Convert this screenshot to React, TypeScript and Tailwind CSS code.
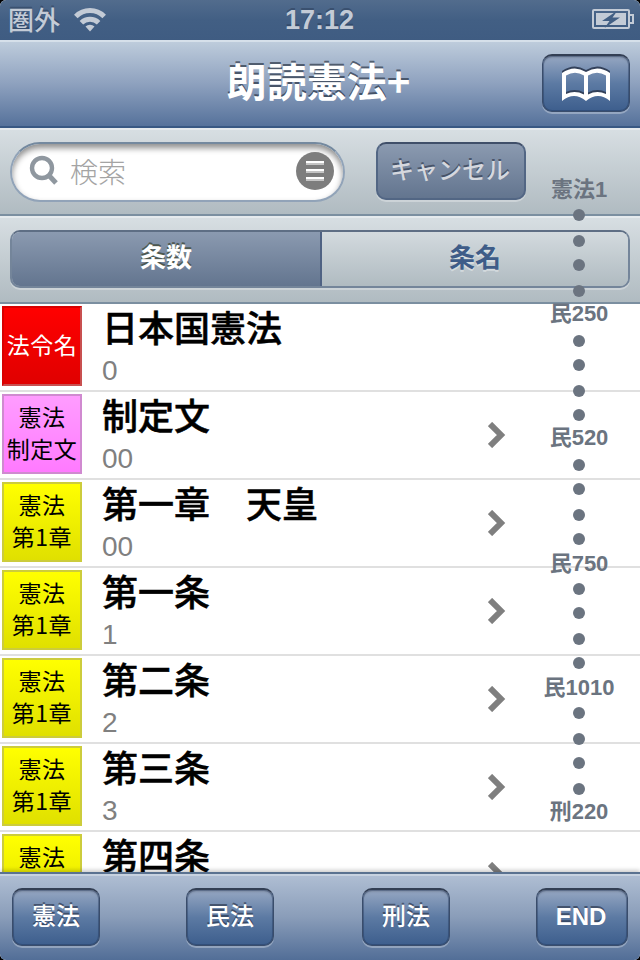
import React from 'react';

type Law = {
  title: string;
  sub?: string;
  badge: string[];
  tone: 'red' | 'pink' | 'yellow';
};

const LAWS: Law[] = [
  { title: '日本国憲法', sub: '0', badge: ['法令名'], tone: 'red' },
  { title: '制定文', sub: '00', badge: ['憲法', '制定文'], tone: 'pink' },
  { title: '第一章　天皇', sub: '00', badge: ['憲法', '第1章'], tone: 'yellow' },
  { title: '第一条', sub: '1', badge: ['憲法', '第1章'], tone: 'yellow' },
  { title: '第二条', sub: '2', badge: ['憲法', '第1章'], tone: 'yellow' },
  { title: '第三条', sub: '3', badge: ['憲法', '第1章'], tone: 'yellow' },
  { title: '第四条', badge: ['憲法'], tone: 'yellow' },
];

const TONES = {
  red: 'pt-[20px] from-[#ff0000] to-[#e00000] text-white border-t-[#d80000] border-l-[#d80000] border-r-[#c85050] border-b-[#c85050]',
  pink: 'pt-[4px] from-[#ff9cff] to-[#ff7aff] text-black border-[#d08ad0]',
  yellow: 'pt-[4px] from-[#ffff00] to-[#e0e000] text-black border-[#cccc3c]',
};

// Index entries: a text label or a dot; "tall" entries are two pixels taller.
const INDEX: { label?: string; tall?: boolean }[] = [
  { label: '憲法1' }, { tall: true }, {}, { tall: true }, {},
  { label: '民250', tall: true }, {}, { tall: true }, {}, {},
  { label: '民520', tall: true }, {}, { tall: true }, {}, { tall: true },
  { label: '民750' }, {}, { tall: true }, {}, { tall: true },
  { label: '民1010' }, { tall: true }, {}, { tall: true }, {},
  { label: '刑220' },
];

const BOOK =
  'M1 6Q13-2.500 25 5Q37-2.500 49 6V34Q37 24 25 34Q13 24 1 34ZM5 8.500V27Q14 23 23 27.500V8.500Q14 3 5 8.500ZM27 8.500V27.500Q36 23 45 27V8.500Q36 3 27 8.500Z';

const JP = "font-['Noto_Sans_CJK_JP',sans-serif]";
const LATIN = "font-['Liberation_Sans','Noto_Sans_CJK_JP',sans-serif]";
const BLUE_BUTTON =
  'flex h-[58px] items-center justify-center rounded-[10px] border border-[#3a4d6b] border-t-2 border-t-[#333f54] bg-linear-to-b from-[#96a7c2] via-[#5c7aa3] to-[#3d5e8d] text-white shadow-[0_2px_0_rgba(255,255,255,0.3),inset_0_0_0_1px_rgba(30,50,85,0.35),inset_0_2px_2px_rgba(0,0,0,0.15)]';
const BAR = 'flex h-[88px] items-center border-b-2 border-[#7b8fa0] bg-linear-to-b from-[#d8dfe3] to-[#b0bbc1] shadow-[inset_0_2px_0_#e5eaed]';

function StatusBar() {
  return (
    <div className="grid h-10 grid-cols-3 items-center bg-linear-to-b from-[#526c8d] via-[#425f84] to-[#3f5c82] pr-[6px] pl-2 text-[#c3cbd6]">
      <div className="flex items-center gap-[14px]">
        <span className={`${JP} pb-[3px] text-[26px] leading-[37px] font-medium [text-shadow:0_-2px_0_rgba(30,45,70,0.4)]`}>圏外</span>
        <svg width="32" height="24" viewBox="0 0 32 24" fill="none" stroke="#c3cbd6" strokeWidth="5">
          <path d="M1.800 8.500a20 20 0 0 1 28.400 0" />
          <path d="M7.400 14.700a12.300 12.300 0 0 1 17.200 0" />
          <path d="M16 23.600l-4.500-5a6.500 6.500 0 0 1 9 0z" fill="#c3cbd6" stroke="none" />
        </svg>
      </div>
      <span className={`${LATIN} pr-[3px] text-center text-[27px] leading-10 font-bold [text-shadow:0_-2px_0_rgba(30,45,70,0.4)]`}>17:12</span>
      <svg className="justify-self-end" width="42" height="22" viewBox="0 0 42 22">
        <rect x="1" y="1" width="36" height="18" rx="1" fill="none" stroke="#c3cbd6" strokeWidth="2" />
        <path d="M38 6h3v8h-3" fill="none" stroke="#c3cbd6" strokeWidth="2" />
        <path d="M4 4h30v12H4z" fill="#c3cbd6" />
        <path d="M25.500 1.500L10 12h7.500l-5 7L28 8.500h-7.500z" fill="#425f84" />
      </svg>
    </div>
  );
}

function NavBar() {
  return (
    <div className="grid h-[88px] grid-cols-[85px_1fr_88px] items-center border-b-2 border-[#385883] bg-linear-to-b from-[#c0cedd] via-[#8fa2bf] to-[#56729b] px-[10px] shadow-[inset_0_2px_0_#d6e0ea]">
      <span />
      <h1 className={`${JP} pb-[6px] text-center text-[40px] leading-[60px] font-bold text-white [text-shadow:0_-2px_0_rgba(30,40,55,0.65)]`}>
        朗読憲法+
      </h1>
      <button className={`${BLUE_BUTTON} w-[88px]`}>
        <svg width="50" height="38" viewBox="0 -2 50 38" fillRule="evenodd">
          <path d={BOOK} transform="translate(0 -2)" fill="#33415a" />
          <path d={BOOK} fill="#fff" />
        </svg>
      </button>
    </div>
  );
}

function SearchBar() {
  return (
    <div className={`${BAR} gap-[31px] pl-[10px]`}>
      <div className="mt-[2px] flex h-[60px] w-[335px] items-center rounded-full border-2 border-[#91a3b8] border-t-[#74899f] bg-white pr-[9px] pb-[2px] pl-[17px] shadow-[inset_0_4px_6px_rgba(0,0,0,0.45)]">
        <svg width="30" height="32" viewBox="0 0 30 32" fill="none" stroke="#8f979f" strokeWidth="4.400">
          <circle cx="13" cy="13" r="10" />
          <path d="M19.500 20l7.500 8" strokeWidth="5" />
        </svg>
        <span className={`${JP} ml-[11px] flex-1 text-[28px] leading-10 font-light text-[#a4a4a4]`}>検索</span>
        <span className="flex size-[38px] flex-col items-center justify-center gap-1 rounded-full bg-[#7d7d7d]">
          <i className="h-1 w-[18px] border-b-2 border-[#c4c4c4] bg-white" />
          <i className="h-1 w-[18px] border-b-2 border-[#c4c4c4] bg-white" />
          <i className="h-1 w-[18px] border-b-2 border-[#c4c4c4] bg-white" />
        </span>
      </div>
      <button className={`${JP} flex h-[58px] w-[150px] items-center justify-center rounded-[10px] border-2 border-[#526684] border-t-[#404f69] bg-linear-to-b from-[#8b9ab0] to-[#63758f] pr-[2px] pb-[5px] text-[24px] font-medium text-[#d5d8de] shadow-[0_2px_0_rgba(255,255,255,0.3)] [text-shadow:0_-2px_0_rgba(50,60,80,0.7)]`}>
        キャンセル
      </button>
    </div>
  );
}

function ScopeBar() {
  return (
    <div className={`${BAR} px-[10px]`}>
      <div className={`${JP} flex h-[58px] w-full overflow-hidden rounded-[10px] border-2 border-[#74859a] border-t-[#5e6e84] text-[26px] font-bold shadow-[0_2px_0_rgba(255,255,255,0.3)]`}>
        <div className="flex w-[310px] items-center justify-center border-r-2 border-[#4f6283] bg-linear-to-b from-[#8b9ab0] to-[#63758f] pb-[7px] text-white [text-shadow:0_-2px_0_#4c5750]">
          条数
        </div>
        <div className="flex flex-1 items-center justify-center bg-linear-to-b from-[#d3dade] to-[#b0bbc1] pb-[7px] text-[#3e5c88] [text-shadow:0_2px_0_rgba(255,255,255,0.4)]">
          条名
        </div>
      </div>
    </div>
  );
}

function LawRow({ law, arrow }: { law: Law; arrow: boolean }) {
  return (
    <div className="flex h-[88px] shrink-0 border-b-2 border-[#e0e0e0] pt-[2px] pl-[2px]">
      <div className={`${JP} flex size-20 flex-col items-center border-2 bg-linear-to-b text-[23px] leading-8 font-normal whitespace-nowrap ${TONES[law.tone]}`}>
        {law.badge.map((line) => (
          <span key={line} className="tracking-[0.5px]">{line}</span>
        ))}
      </div>
      <div className="ml-5 flex-1">
        <div className={`${JP} text-[36px] leading-10 font-medium text-black [-webkit-text-stroke:0.5px_black]`}>{law.title}</div>
        {law.sub && <div className={`${LATIN} mt-[9px] text-[28px] leading-8 text-[#808080]`}>{law.sub}</div>}
      </div>
      {arrow && (
        <svg className="mt-7 mr-[134px]" width="18" height="26" viewBox="0 0 18 26" fill="none" stroke="#7f7f7f" strokeWidth="6">
          <path d="M2 2l11 11L2 24" />
        </svg>
      )}
    </div>
  );
}

function SectionIndex() {
  return (
    <div className="absolute top-[179px] right-4 flex w-[90px] flex-col items-center">
      {INDEX.map((entry, i) => (
        <div key={i} className={`flex shrink-0 justify-center ${entry.tall ? 'h-[26px]' : 'h-6'}`}>
          {entry.label ? (
            <span className={`${LATIN} mt-px text-[22px] leading-5 font-bold whitespace-nowrap text-[#6b7480]`}>{entry.label}</span>
          ) : (
            <span className="mt-[6px] size-3 rounded-full bg-[#6b7480]" />
          )}
        </div>
      ))}
    </div>
  );
}

function Toolbar() {
  const shadow = '[text-shadow:0_-2px_0_rgba(35,45,65,0.6)]';
  return (
    <div className="grid h-[88px] grid-cols-[174px_176px_174px_92px] items-start border-t-2 border-[#5a7290] bg-linear-to-b from-[#b0bfd4] via-[#8a9db9] to-[#526e97] px-3 pt-[14px] shadow-[0_-2px_4px_rgba(0,0,0,0.2),inset_0_2px_0_#c7d2e0]">
      {['憲法', '民法', '刑法'].map((name) => (
        <button key={name} className={`${BLUE_BUTTON} ${JP} ${shadow} w-[88px] pb-[6px] text-[24px] font-medium`}>{name}</button>
      ))}
      <button className={`${BLUE_BUTTON} ${LATIN} ${shadow} w-[92px] pr-[2px] pb-[2px] text-[24px] font-bold`}>END</button>
    </div>
  );
}

export default function App() {
  return (
    <div className="bg-black">
      <div className="relative flex h-[960px] w-[640px] flex-col overflow-hidden rounded-[6px] bg-white">
        <StatusBar />
        <NavBar />
        <SearchBar />
        <ScopeBar />
        <div className="flex h-[568px] flex-col overflow-hidden bg-white">
          {LAWS.map((law, i) => (
            <LawRow key={law.title} law={law} arrow={i > 0} />
          ))}
        </div>
        <Toolbar />
        <SectionIndex />
      </div>
    </div>
  );
}
